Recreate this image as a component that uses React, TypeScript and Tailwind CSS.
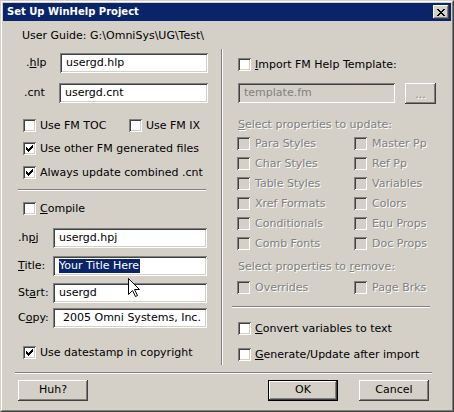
import React from "react";

// classic 3D edges
const SUNKEN = "shadow-[inset_1px_1px_0_#808080,inset_-1px_-1px_0_#ffffff,inset_2px_2px_0_#404040,inset_-2px_-2px_0_#d4d0c8]";
const RAISED = "shadow-[inset_-1px_-1px_0_#404040,inset_1px_1px_0_#ffffff,inset_-2px_-2px_0_#808080,inset_2px_2px_0_#d4d0c8]";
const DIM = "text-[#808080] [text-shadow:1px_1px_0_#ffffff]";

function Check({ on, off }: { on?: boolean; off?: boolean }) {
  return (
    <div className={`w-[13px] h-[13px] shrink-0 flex items-center justify-center ${off ? "bg-[#d4d0c8]" : "bg-white"} ${SUNKEN}`}>
      {on && (
        <svg width="7" height="7" viewBox="0 0 7 7" shapeRendering="crispEdges">
          <path d="M6 0h1v1H6z M5 1h2v1H5z M0 2h1v1H0z M4 2h3v1H4z M0 3h2v1H0z M3 3h3v1H3z M0 4h5v1H0z M1 5h3v1H1z M2 6h1v1H2z" fill="#000" />
        </svg>
      )}
    </div>
  );
}

function Opt({ on, off, wide, className = "", children }: { on?: boolean; off?: boolean; wide?: boolean; className?: string; children: React.ReactNode }) {
  return (
    <div className={`h-[13px] flex items-center ${wide ? "gap-[5px]" : "gap-[4px]"} ${className}`}>
      <Check on={on} off={off} />
      <span className={`leading-[13px] whitespace-nowrap ${off ? DIM : ""}`}>{children}</span>
    </div>
  );
}

function Field({ className = "", off, children }: { className?: string; off?: boolean; children?: React.ReactNode }) {
  return (
    <div className={`h-[20px] flex items-center pl-[6px] whitespace-nowrap ${off ? "bg-[#d4d0c8] text-[#808080]" : "bg-white"} ${SUNKEN} ${className}`}>
      {children}
    </div>
  );
}

function Btn({ className = "", def, children }: { className?: string; def?: boolean; children: React.ReactNode }) {
  if (def) {
    return (
      <div className={`h-[21px] border border-black ${className}`}>
        <div className={`h-full flex items-center justify-center ${RAISED}`}>{children}</div>
      </div>
    );
  }
  return <div className={`h-[21px] flex items-center justify-center ${RAISED} ${className}`}>{children}</div>;
}

export default function App() {
  return (
    <div className="relative w-[454px] h-[412px] bg-[#d4d0c8] text-black text-[11px] font-['DejaVu_Sans',sans-serif] border border-t-[#d4d0c8] border-l-[#d4d0c8] border-r-[#404040] border-b-[#404040]">
      <div className="h-full border border-t-white border-l-white border-r-[#808080] border-b-[#808080] p-[1px]">
        {/* title bar */}
        <div className="h-[18px] bg-[#0a246a] flex items-center justify-between pl-[4px] pr-[2px]">
          <span className="text-white font-bold text-[10px] leading-[18px]">Set Up WinHelp Project</span>
          <div className={`w-[16px] h-[14px] bg-[#d4d0c8] flex items-center justify-center ${RAISED}`}>
            <svg width="8" height="7" viewBox="0 0 8 7" shapeRendering="crispEdges">
              <path d="M0 0h2v1H0z M6 0h2v1H6z M1 1h2v1H1z M5 1h2v1H5z M2 2h4v1H2z M3 3h2v1H3z M2 4h4v1H2z M1 5h2v1H1z M5 5h2v1H5z M0 6h2v1H0z M6 6h2v1H6z" fill="#000" />
            </svg>
          </div>
        </div>

        <div className="pl-[12px] flex flex-col">
          <div className="flex items-start">
            {/* left column */}
            <div className="w-[206px] shrink-0 flex flex-col">
              <div className="mt-[8px] h-[14px] pl-[7px] flex items-center whitespace-nowrap">{"User Guide: G:\\OmniSys\\UG\\Test\\"}</div>

              <div className="mt-[10px] h-[20px] pl-[11px] flex items-center">
                <span className="w-[34px]">.<u>h</u>lp</span>
                <Field className="w-[148px]">usergd.hlp</Field>
              </div>
              <div className="mt-[10px] h-[20px] pl-[9px] flex items-center">
                <span className="w-[35px]">.cnt</span>
                <Field className="w-[149px]">usergd.cnt</Field>
              </div>

              <div className="mt-[16px] pl-[8px] flex">
                <Opt className="w-[106px]">Use FM TOC</Opt>
                <Opt>Use FM IX</Opt>
              </div>
              <Opt on className="mt-[10px] pl-[8px]">Use other FM generated files</Opt>
              <Opt on className="mt-[11px] pl-[8px]">Always update combined .cnt</Opt>

              <div className="mt-[10px] ml-[3px] w-[188px] h-[2px] border-t border-t-[#808080] border-b border-b-white" />

              <Opt className="mt-[11px] pl-[8px]"><u>C</u>ompile</Opt>

              <div className="mt-[13px] h-[20px] pl-[3px] flex items-center">
                <span className="w-[35px]">.h<u>p</u>j</span>
                <Field className="w-[154px]">usergd.hpj</Field>
              </div>
              <div className="mt-[8px] h-[20px] pl-[3px] flex items-center">
                <span className="w-[35px]"><u>T</u>itle:</span>
                <Field className="w-[154px]">
                  <span className="inline-block h-[14px] leading-[14px] bg-[#0a246a] text-white pr-[1px]">Your Title Here</span>
                </Field>
              </div>
              <div className="mt-[7px] h-[20px] pl-[3px] flex items-center">
                <span className="w-[35px]">St<u>a</u>rt:</span>
                <Field className="w-[154px]">usergd</Field>
              </div>
              <div className="mt-[5px] h-[20px] pl-[3px] flex items-center">
                <span className="w-[35px]">C<u>o</u>py:</span>
                <Field className="w-[154px] pl-[10px]">2005 Omni Systems, Inc.</Field>
              </div>

              <Opt on className="mt-[18px] pl-[8px]">Use datestamp in copyright</Opt>
            </div>

            {/* etched divider */}
            <div className="mt-[28px] h-[316px] w-[2px] shrink-0 border-l border-l-[#808080] border-r border-r-white" />

            {/* right column */}
            <div className="flex-1 pl-[9px] flex flex-col">
              <Opt className="mt-[37px] pl-[6px]"><u>I</u>mport FM Help Template:</Opt>

              <div className="mt-[12px] h-[20px] pl-[6px] flex items-center">
                <Field off className="w-[157px]">template.fm</Field>
                <Btn className="ml-[10px] w-[31px]">
                  <span className={`${DIM} leading-[10px] pt-[4px]`}>...</span>
                </Btn>
              </div>

              <div className={`mt-[15px] h-[14px] pl-[6px] flex items-center ${DIM}`}>
                <span><u>S</u>elect properties to update:</span>
              </div>

              <div className="mt-[5px] pl-[5px] grid grid-cols-[117px_auto] gap-y-[7px]">
                {["Para Styles", "Master Pp", "Char Styles", "Ref Pp", "Table Styles", "Variables", "Xref Formats", "Colors", "Conditionals", "Equ Props", "Comb Fonts", "Doc Props"].map((t) => (
                  <Opt key={t} off wide>{t}</Opt>
                ))}
              </div>

              <div className={`mt-[10px] h-[14px] pl-[6px] flex items-center ${DIM}`}>
                <span>Select properties to <u>r</u>emove:</span>
              </div>

              <div className="mt-[7px] pl-[5px] grid grid-cols-[117px_auto]">
                <Opt off wide>Overrides</Opt>
                <Opt off wide>Page Brks</Opt>
              </div>

              <div className="mt-[12px] w-[198px] h-[2px] border-t border-t-[#808080] border-b border-b-white" />

              <Opt className="mt-[14px] pl-[6px]"><u>C</u>onvert variables to text</Opt>
              <Opt className="mt-[13px] pl-[6px]"><u>G</u>enerate/Update after import</Opt>
            </div>
          </div>

          <div className="mt-[7px] w-[417px] h-[2px] border-t border-t-[#808080] border-b border-b-white" />

          <div className="mt-[6px] flex">
            <Btn className="ml-[3px] w-[70px]">Huh?</Btn>
            <Btn def className="ml-[180px] w-[70px]">OK</Btn>
            <Btn className="ml-[21px] w-[70px]">Cancel</Btn>
          </div>
        </div>
      </div>

      {/* mouse pointer over the Title field */}
      <svg className="absolute left-[127px] top-[277px]" width="13" height="20" viewBox="0 0 13 20">
        <polygon points="0.5,0.5 0.5,16.5 4.5,12.5 7.5,18.5 9.5,17.5 6.5,11.5 11.5,11.5" fill="#fff" stroke="#000" strokeWidth="1" />
      </svg>
    </div>
  );
}
